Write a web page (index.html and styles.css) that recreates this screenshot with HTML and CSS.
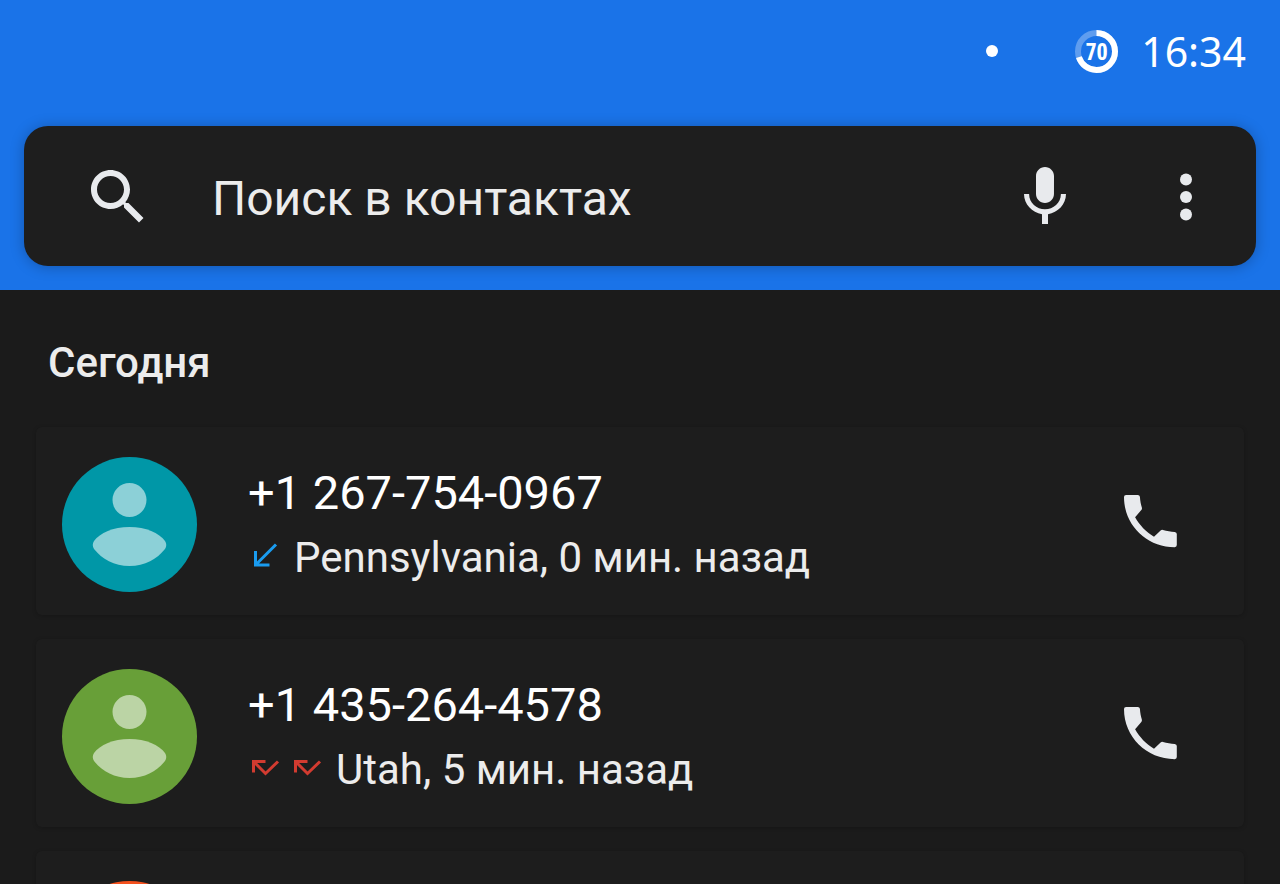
FILE: index.html
```html
<!DOCTYPE html>
<html lang="ru">
<head>
    <meta charset="UTF-8">
    <meta name="viewport" content="width=device-width, initial-scale=1.0">
    <title>Телефон</title>
    <link rel="stylesheet" href="styles.css">
</head>
<body>
    <!-- shared icon shapes -->
    <svg class="sprite" aria-hidden="true">
        <symbol id="person" viewBox="0 0 135 135">
            <circle cx="67.5" cy="43" r="17"/>
            <path d="M67.5 70C84 70 97 76 103 84Q105.500 88 103 92C95 102 83 109 67.500 109S40 102 32 92Q29.500 88 32 84C38 76 51 70 67.500 70z"/>
        </symbol>
        <symbol id="phone" viewBox="0 0 24 24">
            <path d="M3.700 3H7.600Q8.200 3 8.300 3.600C8.400 5 8.600 6.100 8.950 7.200Q9.100 7.700 8.700 8.100L6.700 10.400C8.200 13 10.300 15.300 13 16.900L15.200 14.800Q15.600 14.500 16 14.650C17.300 15.050 18.600 15.250 19.900 15.300Q20.600 15.400 20.600 16V19.700Q20.600 20.400 19.900 20.400C10.500 20.400 3 13 3 3.700Q3 3 3.700 3z"/>
        </symbol>
        <symbol id="missed" viewBox="0 0 36 36">
            <path d="M5.500 23.500V12.500H17.500M5.500 12.500L17.500 24.500L30 12.500"/>
        </symbol>
    </svg>

    <div class="app">
        <header class="header">
            <div class="status-bar">
                <span class="dot"></span>
                <svg class="battery" viewBox="0 0 43 43" role="img" aria-label="70">
                    <circle class="battery-track" cx="21.5" cy="21.5" r="18.5"/>
                    <circle class="battery-level" cx="21.5" cy="21.5" r="18.5" pathLength="100" transform="rotate(-90 21.5 21.5)"/>
                    <text x="21.5" y="30">70</text>
                </svg>
                <time class="clock">16:34</time>
            </div>

            <form class="search" role="search">
                <svg class="icon" viewBox="0 0 24 24" aria-hidden="true">
                    <path d="M15.500 14h-.79l-.28-.27C15.410 12.590 16 11.110 16 9.500 16 5.910 13.090 3 9.500 3S3 5.910 3 9.500 5.910 16 9.500 16c1.610 0 3.090-.59 4.230-1.570l.27.28v.79l5 4.990L20.490 19l-4.990-5zm-6 0C7.010 14 5 11.990 5 9.500S7.010 5 9.500 5 14 7.010 14 9.500 11.990 14 9.500 14z"/>
                </svg>
                <input class="search-input" type="text" placeholder="Поиск в контактах" aria-label="Поиск в контактах">
                <button class="icon-button" type="button" aria-label="Голосовой поиск">
                    <svg class="icon" viewBox="0 0 24 24">
                        <path d="M12 14c1.660 0 2.990-1.340 2.990-3L15 5c0-1.660-1.340-3-3-3S9 3.340 9 5v6c0 1.660 1.340 3 3 3zm5.300-3c0 3-2.540 5.100-5.300 5.100S6.700 14 6.700 11H5c0 3.410 2.720 6.230 6 6.720V21h2v-3.280c3.280-.48 6-3.300 6-6.720h-1.700z"/>
                    </svg>
                </button>
                <button class="icon-button more" type="button" aria-label="Ещё">
                    <svg class="icon" viewBox="0 0 72 72">
                        <circle cx="36" cy="18.500" r="6"/>
                        <circle cx="36" cy="36" r="6"/>
                        <circle cx="36" cy="53.500" r="6"/>
                    </svg>
                </button>
            </form>
        </header>

        <main class="calls">
            <h2 class="day">Сегодня</h2>
            <ul class="call-list">
                <li class="call">
                    <svg class="avatar teal" aria-hidden="true"><use href="#person"/></svg>
                    <div class="info">
                        <div class="number">+1 267-754-0967</div>
                        <div class="details">
                            <svg class="direction incoming" viewBox="0 0 36 36" aria-hidden="true">
                                <path d="M28 7.500L8 27.500M7.500 14V28H21.500"/>
                            </svg>
                            <span class="place">Pennsylvania, 0 мин. назад</span>
                        </div>
                    </div>
                    <button class="icon-button call-button" type="button" aria-label="Позвонить">
                        <svg class="icon"><use href="#phone"/></svg>
                    </button>
                </li>
                <li class="call">
                    <svg class="avatar green" aria-hidden="true"><use href="#person"/></svg>
                    <div class="info">
                        <div class="number">+1 435-264-4578</div>
                        <div class="details">
                            <svg class="direction missed" aria-hidden="true"><use href="#missed"/></svg>
                            <svg class="direction missed" aria-hidden="true"><use href="#missed"/></svg>
                            <span class="place">Utah, 5 мин. назад</span>
                        </div>
                    </div>
                    <button class="icon-button call-button" type="button" aria-label="Позвонить">
                        <svg class="icon"><use href="#phone"/></svg>
                    </button>
                </li>
                <li class="call">
                    <svg class="avatar orange" aria-hidden="true"><use href="#person"/></svg>
                </li>
            </ul>
        </main>
    </div>
</body>
</html>
```

FILE: styles.css
```css
* {
    margin: 0;
    padding: 0;
    box-sizing: border-box;
}

body {
    font-family: Roboto, "Noto Sans", sans-serif;
    background: #1b1b1b;
    color: #ececec;
}

.app {
    height: 100vh;
    overflow: hidden;
}

.sprite {
    display: none;
}

.header {
    background: #1a73e8;
    padding: 0 24px 24px;
}

/* status bar */
.status-bar {
    display: flex;
    align-items: center;
    justify-content: flex-end;
    height: 102px;
    margin-bottom: 24px;
    padding-right: 10px;
}

.dot {
    width: 12px;
    height: 12px;
    margin-right: 77px;
    border-radius: 50%;
    background: #fff;
}

.battery {
    width: 43px;
    height: 43px;
    margin-right: 23px;
}

.battery circle {
    fill: none;
    stroke: #fff;
    stroke-width: 6;
}

.battery .battery-track {
    stroke: rgba(255, 255, 255, 0.3);
}

.battery-level {
    stroke-dasharray: 70 100;
}

.battery text {
    fill: #fff;
    font-family: "Liberation Sans Narrow", "Open Sans Condensed", Roboto, sans-serif;
    font-size: 24px;
    font-weight: bold;
    text-anchor: middle;
}

.clock {
    font-family: "Noto Sans", sans-serif;
    font-size: 41px;
    line-height: 56px;
    color: #fff;
}

/* search */
.search {
    display: flex;
    align-items: center;
    height: 140px;
    padding: 2px 34px 0 58px;
    border-radius: 24px;
    background: #1e1e1e;
    box-shadow: 0 1px 14px rgba(0, 0, 0, 0.25);
}

.search-input {
    flex: 1;
    min-width: 0;
    height: 72px;
    margin-left: 58px;
    padding-top: 2px;
    border: none;
    outline: none;
    background: transparent;
    color: #ececec;
    font-family: inherit;
    font-size: 48px;
}

.search-input::placeholder {
    color: #ececec;
    opacity: 1;
}

.icon {
    display: block;
    flex: none;
    width: 72px;
    height: 72px;
    fill: #e8eaed;
}

.icon-button {
    flex: none;
    border: none;
    background: none;
    cursor: pointer;
}

.more {
    margin-left: 69px;
}

/* call log */
.day {
    padding: 49px 48px 40px;
    font-size: 42px;
    font-weight: 500;
    line-height: 48px;
}

.call-list {
    display: flex;
    flex-direction: column;
    gap: 24px;
    padding: 0 36px;
    list-style: none;
}

.call {
    display: flex;
    align-items: center;
    padding: 30px 57px 23px 26px;
    border-radius: 6px;
    background: #1d1d1d;
    box-shadow: 0 1px 4px rgba(0, 0, 0, 0.2);
}

.avatar {
    flex: none;
    width: 135px;
    height: 135px;
    border-radius: 50%;
    fill: rgba(255, 255, 255, 0.55);
}

.teal {
    background: #0097a7;
}

.green {
    background: #689f38;
}

.orange {
    background: #f4511e;
}

.info {
    flex: 1;
    min-width: 0;
    margin-left: 51px;
}

.number {
    font-size: 47px;
    line-height: 66px;
    color: #fff;
}

.details {
    display: flex;
    align-items: center;
    font-size: 42px;
    line-height: 64px;
}

.direction {
    flex: none;
    width: 36px;
    height: 36px;
    margin: 0 6px 6px 0;
    fill: none;
    stroke-width: 3;
}

.incoming {
    stroke: #1a9cf0;
}

.missed {
    stroke: #d23b30;
}

.place {
    margin-left: 4px;
}

.call-button {
    padding-bottom: 6px;
}
```
